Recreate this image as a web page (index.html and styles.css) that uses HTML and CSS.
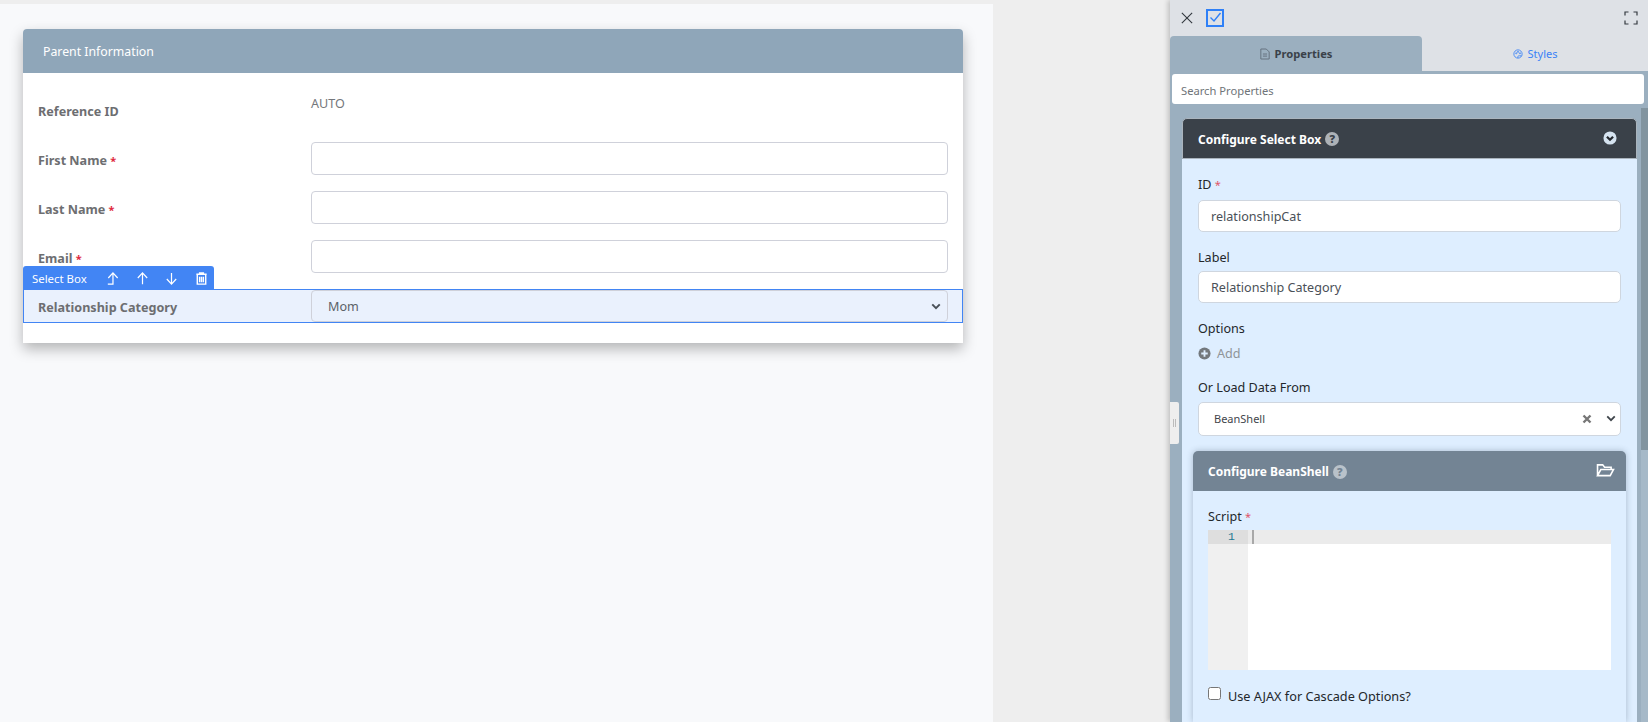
FILE: index.html
```html
<!DOCTYPE html>
<html lang="en">
<head>
    <meta charset="UTF-8">
    <title>Form Builder</title>
    <link rel="stylesheet" href="styles.css">
</head>
<body>
    <!-- Form canvas -->
    <main class="canvas">
        <section class="card">
            <h2 class="card-title">Parent Information</h2>
            <div class="card-body">
                <div class="form-row">
                    <span class="form-label">Reference ID</span>
                    <span class="form-value">AUTO</span>
                </div>
                <div class="form-row">
                    <span class="form-label">First Name <i class="req">*</i></span>
                    <input class="form-input" type="text">
                </div>
                <div class="form-row">
                    <span class="form-label">Last Name <i class="req">*</i></span>
                    <input class="form-input" type="text">
                </div>
                <div class="form-row">
                    <span class="form-label">Email <i class="req">*</i></span>
                    <input class="form-input" type="text">
                </div>
                <div class="form-row form-row-selected">
                    <div class="element-bar">
                        <span class="element-name">Select Box</span>
                        <svg class="bar-icon" viewBox="0 0 16 16"><path d="M3 14h5.500V2.500M3.500 7.500l5-5.500 5 5.500"/></svg>
                        <svg class="bar-icon" viewBox="0 0 16 16"><path d="M3 7.500 8 2l5 5.500M8 2v12"/></svg>
                        <svg class="bar-icon" viewBox="0 0 16 16"><path d="M3 8.500 8 14l5-5.500M8 14V2"/></svg>
                        <svg class="bar-icon bar-trash" viewBox="0 0 16 16"><path d="M2.500 3.500h11M6 3.500V2h4v1.500M3.500 3.500v10.500h9V3.500M6 6v6M8 6v6M10 6v6"/></svg>
                    </div>
                    <span class="form-label">Relationship Category</span>
                    <div class="select-box">
                        <span>Mom</span>
                        <svg class="select-arrow" viewBox="0 0 12 8"><path d="M1.500 1.500 6 6l4.500-4.500"/></svg>
                    </div>
                </div>
            </div>
        </section>
    </main>

    <!-- Properties panel -->
    <aside class="panel">
        <div class="panel-handle"><span></span><span></span></div>
        <div class="panel-top">
            <svg class="top-close" viewBox="0 0 14 14"><path d="M1 1l12 12M13 1 1 13"/></svg>
            <svg class="top-check" viewBox="0 0 18 18"><path d="M1 1h16v16H1z"/><path class="check-mark" d="M4.500 8.500 8 12l6.500-8"/></svg>
            <svg class="top-full" viewBox="0 0 14 14"><path d="M1 4.500V1h3.500M9.500 1H13v3.500M13 9.500V13H9.500M4.500 13H1V9.500"/></svg>
        </div>
        <div class="tabs">
            <div class="tab tab-active">
                <svg class="tab-icon" viewBox="0 0 12 14"><path d="M1 1h6.500L11 4.500V13H1z"/><path d="M3.500 7h5M3.500 9.500h5"/></svg>
                Properties
            </div>
            <div class="tab">
                <svg class="tab-icon" viewBox="0 0 14 14"><circle cx="7" cy="7" r="5.800"/><circle cx="4.500" cy="6" r=".8"/><circle cx="7" cy="4" r=".8"/><circle cx="9.800" cy="6" r=".8"/><path d="M7 12.500c-1-2 0-3 2-3h3"/></svg>
                Styles
            </div>
        </div>
        <div class="panel-body">
            <div class="search-wrap"><input class="search" type="text" placeholder="Search Properties"></div>
            <div class="scroll-area">
                <div class="config">
                    <div class="config-head">
                        <span>Configure Select Box</span>
                        <b class="help">?</b>
                        <svg class="head-toggle" viewBox="0 0 16 16"><circle cx="8" cy="8" r="7.500"/><path d="M4.500 6.500 8 10l3.500-3.500"/></svg>
                    </div>
                    <div class="config-body">
                        <label class="prop-label prop-label-first">ID <i class="req-light">*</i></label>
                        <div class="prop-input">relationshipCat</div>
                        <label class="prop-label">Label</label>
                        <div class="prop-input">Relationship Category</div>
                        <label class="prop-label">Options</label>
                        <div class="add-row">
                            <svg class="add-icon" viewBox="0 0 14 14"><circle cx="7" cy="7" r="6.500"/><path d="M7 3.500v7M3.500 7h7"/></svg>
                            Add
                        </div>
                        <label class="prop-label">Or Load Data From</label>
                        <div class="prop-select">
                            <span class="prop-select-text">BeanShell</span>
                            <svg class="clear-icon" viewBox="0 0 10 10"><path d="M1.500 1.500l7 7M8.500 1.500l-7 7"/></svg>
                            <svg class="prop-arrow" viewBox="0 0 12 8"><path d="M1.500 1.500 6 6l4.500-4.500"/></svg>
                        </div>
                        <div class="sub-config">
                            <div class="sub-head">
                                <span>Configure BeanShell</span>
                                <b class="help">?</b>
                                <svg class="folder-icon" viewBox="0 0 20 16"><path d="M1.500 13.500V2h5.500l2 2.500h7V7M1.500 13.500 5 7h13.500l-3.500 6.500z"/></svg>
                            </div>
                            <div class="sub-body">
                                <label class="prop-label">Script <i class="req-light">*</i></label>
                                <div class="code">
                                    <div class="code-gutter"><div class="code-num">1</div></div>
                                    <div class="code-lines"><div class="code-active"><span class="code-cursor"></span></div></div>
                                </div>
                                <label class="check-row"><input class="check-box" type="checkbox"> Use AJAX for Cascade Options?</label>
                            </div>
                        </div>
                    </div>
                </div>
                <div class="scrollbar"></div>
            </div>
        </div>
    </aside>
</body>
</html>
```

FILE: styles.css
```css
* {
    box-sizing: border-box;
}
body {
    font-family: 'Noto Sans', 'Open Sans', Arial, sans-serif;
    font-size: 12.6px;
    background: #eeeeee;
    width: 1648px;
    height: 722px;
    margin: 0;
    overflow: hidden;
    display: flex;
}
i {
    font-style: normal;
}

/* canvas */
.canvas {
    width: 993px;
    height: 718px;
    margin-top: 4px;
    margin-right: 177px;
    padding: 25px 30px 0 23px;
    background: #f8f9fb;
}
.card {
    height: 314px;
    background: #fff;
    border-radius: 4px 4px 0 0;
    box-shadow: 0 6px 14px rgba(0, 0, 0, 0.28);
}
.card-title {
    height: 44px;
    margin: 0;
    padding-left: 20px;
    background: #8fa6b9;
    border-radius: 4px 4px 0 0;
    color: #fff;
    font-size: 12.3px;
    font-weight: 400;
    line-height: 45px;
}
.card-body {
    padding-top: 20px;
}
.form-row {
    display: flex;
    height: 33px;
    margin-bottom: 16px;
    padding: 0 15px;
}
.form-label {
    width: 273px;
    padding-top: 9px;
    color: #6d6e71;
    font-weight: 700;
    line-height: 20px;
}
.req {
    color: #e0293e;
    font-size: 11px;
}
.form-value {
    padding-top: 1px;
    color: #74777c;
    line-height: 20px;
}
.form-input {
    flex: 1;
    height: 33px;
    background: #fff;
    border: 1px solid #cfd1da;
    border-radius: 4px;
}
.form-row-selected {
    position: relative;
    height: 34px;
    padding: 0 14px;
    background: #eaf1fd;
    border: 1px solid #4285f4;
}
.form-row-selected .form-label {
    padding-top: 8px;
}
.select-box {
    flex: 1;
    display: flex;
    align-items: center;
    justify-content: space-between;
    height: 32px;
    padding: 0 6px 0 16px;
    border: 1px solid #cfd1da;
    border-radius: 4px;
    color: #5c6168;
}
.select-arrow {
    width: 10px;
    height: 7px;
    fill: none;
    stroke: #495057;
    stroke-width: 2.4;
}
.element-bar {
    position: absolute;
    left: -1px;
    top: -24px;
    width: 191px;
    height: 24px;
    display: flex;
    align-items: center;
    padding-left: 9px;
    gap: 14.5px;
    background: #4285f4;
    border-radius: 3px 3px 0 0;
    color: #fff;
    font-size: 11.4px;
}
.element-name {
    width: 58.5px;
    white-space: nowrap;
}
.bar-icon {
    width: 15px;
    height: 15px;
    fill: none;
    stroke: #fff;
    stroke-width: 1.3;
}
.bar-trash {
    stroke-width: 1.5;
}

/* panel */
.panel {
    position: relative;
    width: 478px;
    height: 722px;
    background: #dee1e6;
    box-shadow: -2px 0 5px rgba(0, 0, 0, 0.2);
}
.panel-handle {
    position: absolute;
    left: 0;
    top: 402px;
    width: 9px;
    height: 42px;
    display: flex;
    align-items: center;
    justify-content: center;
    gap: 1px;
    background: #eeeeee;
    border-radius: 0 2px 2px 0;
    z-index: 2;
}
.panel-handle span {
    width: 1px;
    height: 8px;
    background: #bbb;
}
.panel-top {
    display: flex;
    align-items: center;
    height: 36px;
    padding-left: 11px;
}
.top-close {
    width: 12px;
    height: 12px;
    fill: none;
    stroke: #343a40;
    stroke-width: 1.3;
}
.top-check {
    width: 18px;
    height: 18px;
    margin-left: 13px;
    fill: none;
    stroke: #2f80f7;
    stroke-width: 2;
}
.check-mark {
    stroke-width: 1.4;
}
.top-full {
    width: 14px;
    height: 14px;
    margin-left: auto;
    margin-right: 10px;
    fill: none;
    stroke: #343a40;
    stroke-width: 1.2;
}
.tabs {
    display: flex;
    height: 35px;
}
.tab {
    flex: 1;
    display: flex;
    align-items: center;
    justify-content: center;
    gap: 5px;
    color: #3b82f6;
    font-size: 11px;
}
.tab-active {
    flex: 0 0 252px;
    background: #9bafbf;
    border-radius: 4px 4px 0 0;
    color: #3a4149;
    font-size: 11.2px;
    font-weight: 700;
}
.tab-icon {
    width: 10px;
    height: 12px;
    fill: none;
    stroke: currentColor;
    stroke-width: 1.2;
}
.tab-active .tab-icon {
    stroke: #667380;
}
.panel-body {
    height: 651px;
    background: #9bafbf;
}
.search-wrap {
    padding: 3px 4px 0 2px;
}
.search {
    display: block;
    width: 100%;
    height: 30px;
    padding: 2px 9px 0;
    background: #fff;
    border: 0;
    border-radius: 3px;
    font-family: inherit;
    font-size: 11.2px;
}
.search::placeholder {
    color: #6f7478;
}
.scroll-area {
    position: relative;
    height: 618px;
    padding: 14px 11px 0 12px;
    overflow: hidden;
}
.scrollbar {
    position: absolute;
    right: 0;
    top: 4px;
    width: 7px;
    height: 614px;
    background: linear-gradient(#82949f 0, #82949f 342px, #a6b9c8 342px);
}
.config {
    border-radius: 4px 4px 0 0;
}
.config-head {
    display: flex;
    align-items: center;
    gap: 4px;
    height: 41px;
    padding: 1px 15px 0;
    background: #3a4149;
    border: 1px solid #aab4bd;
    border-radius: 5px 5px 0 0;
    color: #fff;
    font-size: 12px;
    font-weight: 700;
}
.help {
    width: 14px;
    height: 14px;
    background: #adb2b7;
    border-radius: 50%;
    color: #3a4149;
    font-size: 11px;
    line-height: 14px;
    text-align: center;
}
.head-toggle {
    width: 14px;
    height: 14px;
    margin-left: auto;
    margin-right: 4px;
    margin-top: -2px;
}
.head-toggle circle {
    fill: #d5e3f0;
}
.head-toggle path {
    fill: none;
    stroke: #23282d;
    stroke-width: 2.6;
}
.config-body {
    height: 563px;
    padding: 17px 16px 0;
    background: #deeeff;
}
.prop-label {
    display: block;
    height: 18px;
    margin-bottom: 5px;
    color: #23272b;
    line-height: 20px;
}
.prop-label-first {
    margin-bottom: 6px;
    line-height: 18px;
}
.req-light {
    color: #e0556a;
    font-size: 11px;
}
.prop-input {
    height: 32px;
    margin-bottom: 16px;
    padding-left: 12px;
    background: #fff;
    border: 1px solid #cfd6df;
    border-radius: 5px;
    color: #4a5057;
    line-height: 31px;
}
.add-row {
    display: flex;
    align-items: center;
    gap: 6px;
    height: 18px;
    margin-top: 7px;
    margin-bottom: 16px;
    color: #8f9498;
}
.add-icon {
    width: 13px;
    height: 13px;
}
.add-icon circle {
    fill: #73787d;
}
.add-icon path {
    fill: none;
    stroke: #deeeff;
    stroke-width: 2;
}
.prop-select {
    display: flex;
    align-items: center;
    height: 34px;
    margin-top: 6px;
    padding: 0 4px 1px 15px;
    background: #fff;
    border: 1px solid #cfd6df;
    border-radius: 5px;
    color: #3f454b;
    font-size: 11px;
}
.prop-select-text {
    flex: 1;
}
.clear-icon {
    width: 10px;
    height: 10px;
    margin-right: 14px;
    fill: none;
    stroke: #777;
    stroke-width: 2.4;
}
.prop-arrow {
    width: 10px;
    height: 7px;
    fill: none;
    stroke: #3f454b;
    stroke-width: 2.2;
}
.sub-config {
    margin: 15px -5px 0;
    border-radius: 5px 5px 0 0;
    box-shadow: 0 0 6px rgba(40, 60, 80, 0.3);
}
.sub-head {
    display: flex;
    align-items: center;
    gap: 4px;
    height: 40px;
    padding: 1px 15px 0;
    background: #738494;
    border-radius: 5px 5px 0 0;
    color: #fff;
    font-size: 12px;
    font-weight: 700;
}
.sub-head .help {
    background: #b9c2ca;
    color: #738494;
}
.folder-icon {
    width: 19px;
    height: 15px;
    margin-left: auto;
    margin-right: -4px;
    margin-top: -2px;
    fill: none;
    stroke: #fff;
    stroke-width: 1.7;
}
.sub-body {
    height: 231px;
    padding: 16px 15px 0;
    background: #deeeff;
}
.code {
    display: flex;
    height: 140px;
    margin-bottom: 17px;
    background: #fff;
}
.code-gutter {
    width: 40px;
    background: #f0f0f0;
}
.code-num {
    height: 14px;
    padding-right: 13px;
    background: #dedede;
    color: #237893;
    font-family: 'Liberation Mono', monospace;
    font-size: 11.5px;
    line-height: 14px;
    text-align: right;
}
.code-lines {
    flex: 1;
}
.code-active {
    height: 14px;
    padding-left: 4px;
    background: #ebebeb;
}
.code-cursor {
    display: block;
    width: 2px;
    height: 14px;
    background: #a8a8a8;
}
.check-row {
    display: flex;
    align-items: flex-start;
    gap: 7px;
    color: #23272b;
    font-size: 12.7px;
    line-height: 18px;
}
.check-box {
    width: 13px;
    height: 13px;
    margin: 0;
}
```
